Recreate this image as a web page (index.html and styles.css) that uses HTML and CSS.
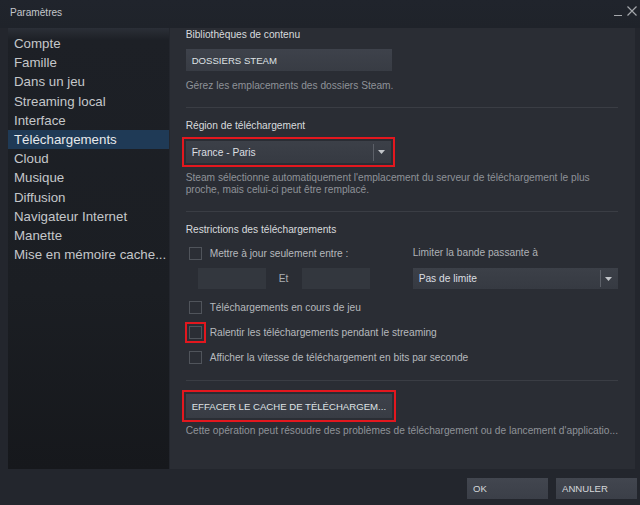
FILE: index.html
```html
<!DOCTYPE html>
<html lang="fr">
<head>
<meta charset="utf-8">
<title>Paramètres</title>
<link rel="stylesheet" href="styles.css">
</head>
<body>
<div class="window">
  <header class="titlebar">
    <span class="title">Paramètres</span>
    <div class="winctl">
      <span class="min"></span>
      <svg class="close" width="10" height="10" viewBox="0 0 10 10"><path d="M0.5 0.5L9.5 9.5M9.5 0.5L0.5 9.5" stroke="#a4a7ab" stroke-width="1.2" fill="none"/></svg>
    </div>
  </header>
  <div class="main">
    <nav class="sidebar">
      <div class="nav-item">Compte</div>
      <div class="nav-item">Famille</div>
      <div class="nav-item">Dans un jeu</div>
      <div class="nav-item">Streaming local</div>
      <div class="nav-item">Interface</div>
      <div class="nav-item active">Téléchargements</div>
      <div class="nav-item">Cloud</div>
      <div class="nav-item">Musique</div>
      <div class="nav-item">Diffusion</div>
      <div class="nav-item">Navigateur Internet</div>
      <div class="nav-item">Manette</div>
      <div class="nav-item">Mise en mémoire cache...</div>
    </nav>
    <section class="content">
      <div class="label first">Bibliothèques de contenu</div>
      <div class="btn btn-lib">DOSSIERS STEAM</div>
      <div class="desc d1">Gérez les emplacements des dossiers Steam.</div>
      <div class="sep s1"></div>
      <div class="label l2">Région de téléchargement</div>
      <div class="select region highlight">
        <span class="val">France - Paris</span>
        <span class="divider"></span>
        <svg class="arrow" width="7" height="4" viewBox="0 0 7 4"><path d="M0 0H7L3.5 4Z" fill="#c3c6ca"/></svg>
      </div>
      <div class="desc d2">Steam sélectionne automatiquement l'emplacement du serveur de téléchargement le plus<br>proche, mais celui-ci peut être remplacé.</div>
      <div class="sep s2"></div>
      <div class="label l3">Restrictions des téléchargements</div>
      <div class="grid-row r1">
        <label class="check"><span class="box"></span><span>Mettre à jour seulement entre :</span></label>
        <span class="sub">Limiter la bande passante à</span>
      </div>
      <div class="grid-row r2">
        <div class="times">
          <span class="input"></span>
          <span class="et">Et</span>
          <span class="input"></span>
        </div>
        <div class="select bw">
          <span class="val">Pas de limite</span>
          <span class="divider"></span>
          <svg class="arrow" width="7" height="4" viewBox="0 0 7 4"><path d="M0 0H7L3.5 4Z" fill="#c3c6ca"/></svg>
        </div>
      </div>
      <label class="check c2"><span class="box"></span><span>Téléchargements en cours de jeu</span></label>
      <label class="check c3"><span class="box highlight"></span><span>Ralentir les téléchargements pendant le streaming</span></label>
      <label class="check c4"><span class="box"></span><span>Afficher la vitesse de téléchargement en bits par seconde</span></label>
      <div class="sep s3"></div>
      <div class="btn btn-cache highlight">EFFACER LE CACHE DE TÉLÉCHARGEM...</div>
      <div class="desc d3">Cette opération peut résoudre des problèmes de téléchargement ou de lancement d'applicatio...</div>
    </section>
  </div>
  <footer class="footer">
    <div class="btn-foot">OK</div>
    <div class="btn-foot">ANNULER</div>
  </footer>
</div>
</body>
</html>
```

FILE: styles.css
```css
* { box-sizing: border-box; }

html, body {
  margin: 0;
  padding: 0;
  background: #23262d;
}

body {
  font-family: "Liberation Sans", Arial, sans-serif;
  color: #c6c8cb;
}

.window {
  width: 640px;
  height: 505px;
  display: flex;
  flex-direction: column;
  background: #23262d;
  overflow: hidden;
}

/* Title bar */
.titlebar {
  height: 28px;
  display: flex;
  align-items: flex-start;
  background: linear-gradient(#20242c, #1f232a);
}

.title {
  margin: 6px 0 0 10px;
  font-size: 10.1px;
  line-height: 14px;
  color: #c4c7cb;
}

.winctl {
  margin-left: auto;
  margin-right: 3px;
  display: flex;
  align-items: flex-start;
  gap: 5px;
}

.min {
  width: 8px;
  height: 1px;
  margin-top: 15px;
  background: #a4a7ab;
}

.close {
  margin-top: 6px;
  display: block;
}

/* Main area */
.main {
  height: 441px;
  display: flex;
  gap: 1px;
  padding: 0 5px 0 8px;
}

.sidebar {
  width: 161px;
  padding-top: 6px;
  background: linear-gradient(#2b2f37 0, #1d2026 12px, #1b1e23 60%, #16181c 100%);
}

.nav-item {
  height: 19.2px;
  line-height: 19.2px;
  padding-left: 6px;
  font-size: 13.3px;
  color: #c5c7ca;
  white-space: nowrap;
  overflow: hidden;
}

.nav-item.active {
  background: #1f3a56;
  color: #e7e9eb;
}

.content {
  flex: 1;
  background: #2a2d34;
  padding: 0 17px 0 16px;
  font-size: 10.2px;
}

.label {
  line-height: 14px;
  color: #d8dbde;
}
.label.l2, .label.l3 { margin-top: 11px; }

.desc {
  line-height: 14px;
  color: #8e9298;
}
.desc.d1 { margin-top: 8px; }
.desc.d2 { margin-top: 9px; line-height: 12px; }
.desc.d3 {
  margin-top: 6px;
  white-space: nowrap;
  overflow: hidden;
  text-overflow: ellipsis;
}

.sep {
  height: 1px;
  background: #3a3d44;
}
.sep.s1 { margin-top: 14px; }
.sep.s2 { margin-top: 15px; }
.sep.s3 { margin-top: 16px; }

.btn {
  width: 206px;
  display: flex;
  align-items: center;
  padding-left: 6px;
  font-size: 9.6px;
  color: #dfe2e5;
  background: linear-gradient(#3e424b, #383c44);
  white-space: nowrap;
}
.btn-lib { height: 22px; margin-top: 7px; }
.btn-cache { height: 24px; margin-top: 13px; }

.highlight {
  outline: 2px solid #e3171e;
  outline-offset: 2px;
}

.select {
  width: 205px;
  height: 22px;
  display: flex;
  align-items: center;
  padding-left: 6px;
  background: linear-gradient(#3c4048, #363a42);
  color: #dcdfe2;
}
.select.region { margin-top: 8px; }
.select.bw { height: 21px; }

.select .val { flex: 1; }

.select .divider {
  width: 1px;
  height: 17px;
  background: #5c6068;
  margin-right: 4px;
}
.select .arrow {
  display: block;
  margin-right: 6px;
}

.grid-row {
  display: grid;
  grid-template-columns: 227px 205px;
  align-items: center;
}
.grid-row.r1 { margin-top: 9px; height: 14px; }
.grid-row.r2 { margin-top: 8px; height: 21px; }

.sub {
  color: #aeb1b6;
  line-height: 14px;
}

.check {
  display: flex;
  align-items: center;
  height: 14px;
  color: #b6b9bd;
  white-space: nowrap;
}
.check.c2, .check.c3, .check.c4 { margin-top: 11px; }

.box {
  width: 13px;
  height: 13px;
  margin: 0 8px 0 3px;
  border: 1px solid #50545b;
  background: #2b2e35;
  flex: none;
}

.times {
  display: flex;
  align-items: center;
  padding-left: 12px;
  height: 21px;
}
.input {
  width: 68px;
  height: 21px;
  background: #33373e;
}
.et {
  width: 36px;
  text-align: center;
  color: #abaeb3;
}

/* Footer */
.footer {
  height: 36px;
  display: flex;
  justify-content: flex-end;
  gap: 8px;
  padding: 9px 3px 0 0;
  background: #23262d;
}

.btn-foot {
  width: 81px;
  height: 21px;
  display: flex;
  align-items: center;
  padding-left: 6px;
  font-size: 9.6px;
  color: #d5d8db;
  background: linear-gradient(#42464f, #3b3f48);
}
```
